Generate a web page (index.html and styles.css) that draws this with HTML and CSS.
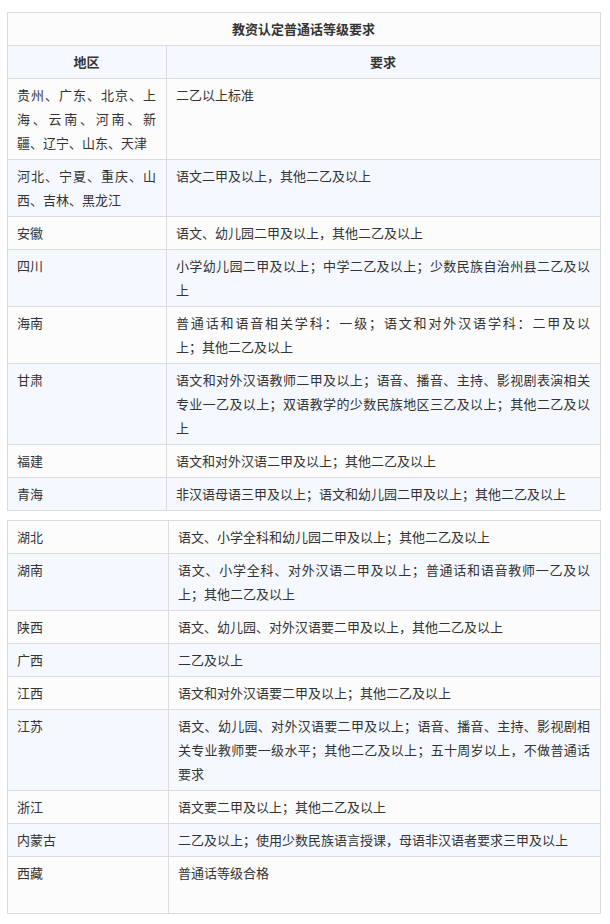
FILE: index.html
```html
<!DOCTYPE html>
<html lang="zh-CN">
<head>
<meta charset="utf-8">
<title>教资认定普通话等级要求</title>
<link rel="stylesheet" href="styles.css">
</head>
<body>
<div class="page">
  <table class="req req-a">
    <colgroup><col class="c1"><col class="c2"></colgroup>
    <tr class="title"><th colspan="2">教资认定普通话等级要求</th></tr>
    <tr class="head"><th>地区</th><th>要求</th></tr>
    <tr><td>贵州、广东、北京、上海、云南、河南、新疆、辽宁、山东、天津</td><td>二乙以上标准</td></tr>
    <tr><td>河北、宁夏、重庆、山西、吉林、黑龙江</td><td>语文二甲及以上，其他二乙及以上</td></tr>
    <tr><td>安徽</td><td>语文、幼儿园二甲及以上，其他二乙及以上</td></tr>
    <tr><td>四川</td><td>小学幼儿园二甲及以上；中学二乙及以上；少数民族自治州县二乙及以上</td></tr>
    <tr><td>海南</td><td><div class="full">普通话和语音相关学科：一级；语文和对外汉语学科：二甲及以</div><div>上；其他二乙及以上</div></td></tr>
    <tr><td>甘肃</td><td>语文和对外汉语教师二甲及以上；语音、播音、主持、影视剧表演相关专业一乙及以上；双语教学的少数民族地区三乙及以上；其他二乙及以上</td></tr>
    <tr><td>福建</td><td>语文和对外汉语二甲及以上；其他二乙及以上</td></tr>
    <tr><td>青海</td><td>非汉语母语三甲及以上；语文和幼儿园二甲及以上；其他二乙及以上</td></tr>
  </table>

  <table class="req req-b">
    <colgroup><col class="c1"><col class="c2"></colgroup>
    <tr><td>湖北</td><td>语文、小学全科和幼儿园二甲及以上；其他二乙及以上</td></tr>
    <tr><td>湖南</td><td>语文、小学全科、对外汉语二甲及以上；普通话和语音教师一乙及以上；其他二乙及以上</td></tr>
    <tr><td>陕西</td><td>语文、幼儿园、对外汉语要二甲及以上，其他二乙及以上</td></tr>
    <tr><td>广西</td><td>二乙及以上</td></tr>
    <tr><td>江西</td><td>语文和对外汉语要二甲及以上；其他二乙及以上</td></tr>
    <tr><td>江苏</td><td>语文、幼儿园、对外汉语要二甲及以上；语音、播音、主持、影视剧相关专业教师要一级水平；其他二乙及以上；五十周岁以上，不做普通话要求</td></tr>
    <tr><td>浙江</td><td>语文要二甲及以上；其他二乙及以上</td></tr>
    <tr><td>内蒙古</td><td>二乙及以上；使用少数民族语言授课，母语非汉语者要求三甲及以上</td></tr>
    <tr><td>西藏</td><td><div class="tall">普通话等级合格</div></td></tr>
  </table>
</div>
</body>
</html>
```

FILE: styles.css
```css
html, body {
  margin: 0;
  padding: 0;
  background: #ffffff;
}

.page {
  padding: 12px 9px 0 7px;
  display: flex;
  flex-direction: column;
  gap: 9px;
  font-family: "Noto Sans CJK SC", "Noto Sans", sans-serif;
  font-size: 13px;
  color: #333333;
}

.req {
  width: 594px;
  border-collapse: collapse;
  table-layout: fixed;
  border: 1px solid #dcdcdc;
}

.req-a .c1 { width: 159px; }
.req-b .c1 { width: 161px; }

.req td,
.req th {
  border: 1px solid #dcdcdc;
  padding: 4px 10px 4px 9px;
  line-height: 24px;
  vertical-align: top;
  text-align: justify;
  background: #fcfcfc;
}

.req th {
  text-align: center;
  font-weight: bold;
}

.req .head th {
  background: #f5f9ff;
}

.req-a tr:nth-child(even) td {
  background: #f5f9ff;
}

.req-b tr:nth-child(even) td {
  background: #f5f9ff;
}

.full {
  text-align-last: justify;
}

.tall {
  height: 48px;
}
```
